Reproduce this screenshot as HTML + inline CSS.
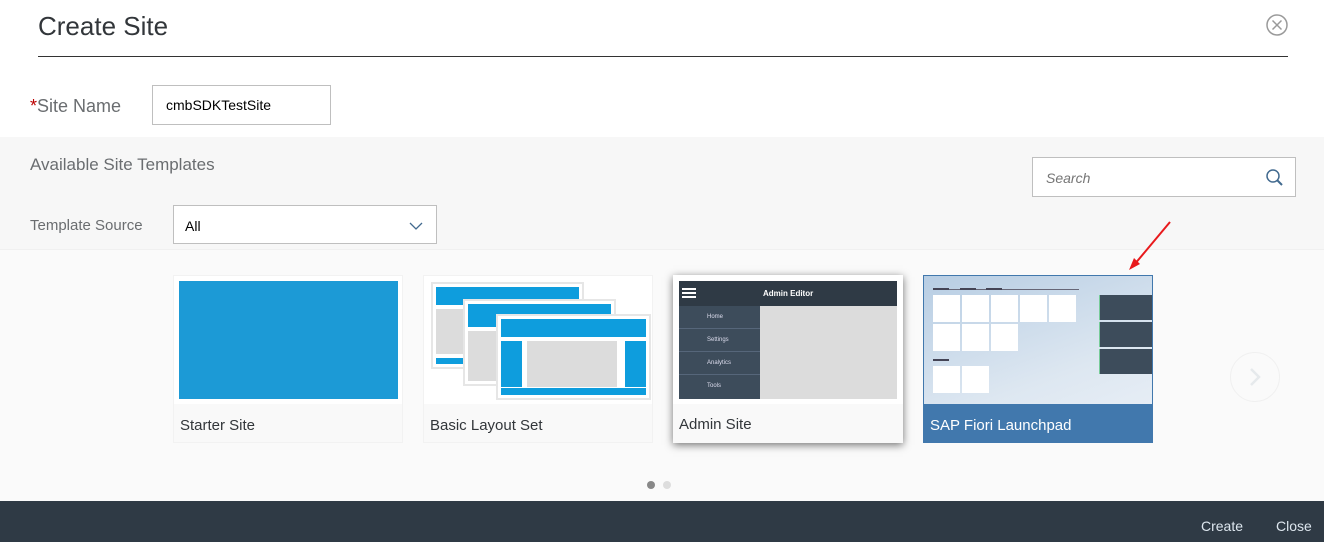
<!DOCTYPE html>
<html><head><style>
*{margin:0;padding:0;box-sizing:border-box}
body{width:1324px;height:542px;position:relative;overflow:hidden;background:#fff;font-family:"Liberation Sans",sans-serif}
.a{position:absolute}
.lbl{position:absolute;left:0;right:0;top:129px;height:39px;padding-left:6px;font-size:15px;color:#32363a;line-height:41px}
</style></head><body>
<div class="a" style="left:38px;top:11px;font-size:26px;color:#32363a">Create Site</div>
<div class="a" style="left:38px;top:56px;width:1250px;height:1px;background:#333"></div>
<svg class="a" style="left:1265px;top:13px" width="24" height="24" viewBox="0 0 24 24"><circle cx="12" cy="12" r="10" fill="none" stroke="#9a9a9a" stroke-width="1.5"/><path d="M7.5 7.5L16.5 16.5M16.5 7.5L7.5 16.5" stroke="#9a9a9a" stroke-width="1.5"/></svg>
<div class="a" style="left:30px;top:96px;font-size:18px;color:#6a6d70"><span style="color:#bb0000">*</span>Site Name</div>
<div class="a" style="left:152px;top:85px;width:179px;height:40px;border:1px solid #bfbfbf;background:#fff;font-size:14px;color:#000;padding:11px 0 0 13px">cmbSDKTestSite</div>
<div class="a" style="left:0;top:137px;width:1324px;height:112px;background:#f7f7f7"></div>
<div class="a" style="left:0;top:249px;width:1324px;height:252px;background:#fafafa;border-top:1px solid #f0f0f0"></div>
<div class="a" style="left:30px;top:155px;font-size:17px;color:#6a6d70">Available Site Templates</div>
<div class="a" style="left:30px;top:217px;font-size:15px;color:#6a6d70">Template Source</div>
<div class="a" style="left:173px;top:205px;width:264px;height:39px;border:1px solid #bfbfbf;background:#fff;font-size:14px;color:#000;padding:12px 0 0 11px">All</div>
<svg class="a" style="left:408px;top:220px" width="16" height="12"><path d="M2 3L8 9L14 3" fill="none" stroke="#426a8f" stroke-width="1.3"/></svg>
<div class="a" style="left:1032px;top:157px;width:264px;height:40px;border:1px solid #bfbfbf;background:#fff;font-size:14px;font-style:italic;color:#757575;padding:12px 0 0 13px">Search</div>
<svg class="a" style="left:1265px;top:167px" width="20" height="20"><circle cx="8" cy="9" r="6" fill="none" stroke="#426a8f" stroke-width="1.5"/><path d="M12.5 13.5L17 18" stroke="#426a8f" stroke-width="2"/></svg>
<svg class="a" style="left:1125px;top:218px" width="50" height="55"><path d="M45 4L9 47" stroke="#e8191c" stroke-width="2"/><path d="M4 52L9 40L15 46Z" fill="#e8191c"/></svg>

<div class="a" style="left:173px;top:275px;width:230px;height:168px;background:#f9f9f9;border:1px solid #f2f2f2">
<div class="a" style="left:0;top:0;width:228px;height:128px;background:#fff"></div>
<div class="a" style="left:5px;top:5px;width:219px;height:118px;background:#1c9ad6"></div>
<div class="lbl">Starter Site</div></div>

<div class="a" style="left:423px;top:275px;width:230px;height:168px;background:#f9f9f9;border:1px solid #f2f2f2">
<div class="a" style="left:0;top:0;width:228px;height:128px;background:#fff"></div>
<div class="a" style="left:7px;top:6px;width:153px;height:87px;border:2px solid #e6e6e6;background:#fff"><div class="a" style="left:3px;top:3px;right:3px;height:18px;background:#0e9ddd"></div><div class="a" style="left:3px;top:25px;right:3px;height:45px;background:#dcdcdc"></div><div class="a" style="left:3px;bottom:3px;right:3px;height:6px;background:#0e9ddd"></div></div>
<div class="a" style="left:39px;top:23px;width:153px;height:87px;border:2px solid #e6e6e6;background:#fff"><div class="a" style="left:3px;top:3px;right:3px;height:23px;background:#0e9ddd"></div><div class="a" style="left:3px;top:30px;right:3px;bottom:3px;background:#dcdcdc"></div></div>
<div class="a" style="left:72px;top:38px;width:155px;height:86px;border:2px solid #e6e6e6;background:#fff"><div class="a" style="left:3px;top:3px;right:3px;height:18px;background:#0e9ddd"></div><div class="a" style="left:3px;top:25px;width:21px;height:46px;background:#0e9ddd"></div><div class="a" style="left:29px;top:25px;width:90px;height:46px;background:#dcdcdc"></div><div class="a" style="right:3px;top:25px;width:21px;height:46px;background:#0e9ddd"></div><div class="a" style="left:3px;bottom:3px;right:3px;height:7px;background:#0e9ddd"></div></div>
<div class="lbl">Basic Layout Set</div></div>

<div class="a" style="left:673px;top:275px;width:230px;height:168px;background:#f9f9f9;box-shadow:0 2px 8px rgba(0,0,0,.55)">
<div class="a" style="left:0;top:0;width:230px;height:129px;background:#fff"></div>
<div class="a" style="left:6px;top:6px;width:218px;height:25px;background:#2f3a45;color:#fff;font-size:8px;font-weight:bold;padding:8px 0 0 84px">Admin Editor</div>
<div class="a" style="left:9px;top:13px;width:14px;height:2px;background:#fff;box-shadow:0 4px 0 #fff,0 8px 0 #fff"></div>
<div class="a" style="left:6px;top:31px;width:81px;height:93px;background:#3d4c5b;font-size:6px;color:#dde">
<div style="height:23px;border-bottom:1px solid #56667a;padding:8px 0 0 28px">Home</div>
<div style="height:23px;border-bottom:1px solid #56667a;padding:8px 0 0 28px">Settings</div>
<div style="height:23px;border-bottom:1px solid #56667a;padding:8px 0 0 28px">Analytics</div>
<div style="height:23px;padding:8px 0 0 28px">Tools</div></div>
<div class="a" style="left:87px;top:31px;width:137px;height:93px;background:#dcdcdc"></div>
<div class="lbl" style="background:#f9f9f9;padding-left:6px">Admin Site</div></div>

<div class="a" style="left:923px;top:275px;width:230px;height:168px;background:#4178ad;border:1px solid #4178ad">
<div class="a" style="left:0;top:0;width:228px;height:128px;background:linear-gradient(160deg,#b7cde3,#dde7f1 70%,#e6edf5)"></div>
<div class="a" style="left:10px;top:13px;width:145px;height:1px;background:#667"></div>
<div class="a" style="left:9px;top:12px;width:16px;height:2px;background:#445"></div>
<div class="a" style="left:36px;top:12px;width:16px;height:2px;background:#445"></div>
<div class="a" style="left:62px;top:12px;width:16px;height:2px;background:#445"></div>
<div class="a" style="left:9px;top:83px;width:16px;height:2px;background:#445"></div>
<div class="a" style="left:9px;top:19px;width:145px;height:56px;background:linear-gradient(#fff,#fff) 0 0/27px 27px no-repeat,linear-gradient(#fff,#fff) 29px 0/27px 27px no-repeat,linear-gradient(#fff,#fff) 58px 0/27px 27px no-repeat,linear-gradient(#fff,#fff) 87px 0/27px 27px no-repeat,linear-gradient(#fff,#fff) 116px 0/27px 27px no-repeat,linear-gradient(#fff,#fff) 0 29px/27px 27px no-repeat,linear-gradient(#fff,#fff) 29px 29px/27px 27px no-repeat,linear-gradient(#fff,#fff) 58px 29px/27px 27px no-repeat"></div>
<div class="a" style="left:9px;top:90px;width:27px;height:27px;background:#fff"></div>
<div class="a" style="left:38px;top:90px;width:27px;height:27px;background:#fff"></div>
<div class="a" style="left:175px;top:19px;width:53px;height:25px;background:#3d4c5b;border-left:1px solid #7c9"></div>
<div class="a" style="left:175px;top:46px;width:53px;height:25px;background:#3d4c5b;border-left:1px solid #7c9"></div>
<div class="a" style="left:175px;top:73px;width:53px;height:25px;background:#3d4c5b;border-left:1px solid #7c9"></div>
<div class="lbl" style="color:#fff">SAP Fiori Launchpad</div></div>

<div class="a" style="left:1230px;top:352px;width:50px;height:50px;border-radius:50%;border:1px solid #f0f0f0"></div>
<svg class="a" style="left:1248px;top:366px" width="14" height="22"><path d="M3 3L11 11L3 19" fill="none" stroke="#e6e9ec" stroke-width="2.5"/></svg>
<div class="a" style="left:647px;top:481px;width:8px;height:8px;border-radius:50%;background:#888"></div>
<div class="a" style="left:663px;top:481px;width:8px;height:8px;border-radius:50%;background:#ddd"></div>

<div class="a" style="left:0;top:501px;width:1324px;height:41px;background:#2f3a45"></div>
<div class="a" style="left:1201px;top:518px;font-size:14px;color:#dde6ee">Create</div>
<div class="a" style="left:1276px;top:518px;font-size:14px;color:#dde6ee">Close</div>
</body></html>
